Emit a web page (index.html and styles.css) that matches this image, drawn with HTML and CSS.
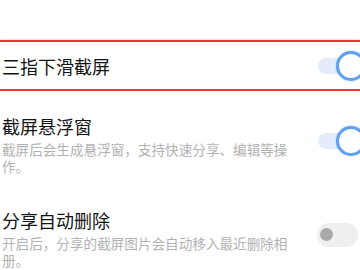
FILE: index.html
```html
<!DOCTYPE html>
<html lang="zh-CN">
<head>
<meta charset="utf-8">
<link rel="stylesheet" href="styles.css">
</head>
<body>
<div class="page">
  <div class="row row-hl">
    <div class="text">
      <div class="title">三指下滑截屏</div>
    </div>
    <div class="switch on"><span class="track"></span><span class="knob"></span></div>
  </div>
  <div class="row row-2">
    <div class="text">
      <div class="title">截屏悬浮窗</div>
      <div class="desc">截屏后会生成悬浮窗，支持快速分享、编辑等操作。</div>
    </div>
    <div class="switch on"><span class="track"></span><span class="knob"></span></div>
  </div>
  <div class="row row-3">
    <div class="text">
      <div class="title">分享自动删除</div>
      <div class="desc">开启后，分享的截屏图片会自动移入最近删除相册。</div>
    </div>
    <div class="switch off"><span class="track"></span><span class="dot"></span></div>
  </div>
</div>
</body>
</html>
```
FILE: styles.css
```css
html, body {
  margin: 0;
  padding: 0;
  background: #ffffff;
}
.page {
  width: 360px;
  height: 270px;
  overflow: hidden;
  font-family: "Noto Sans CJK SC", "Noto Sans", sans-serif;
  padding-top: 40px;
  box-sizing: border-box;
}
.row {
  display: flex;
  align-items: center;
  justify-content: space-between;
  padding-left: 2px;
}
.row-hl {
  height: 47px;
  border-top: 2px solid #f3343a;
  border-bottom: 2px solid #f3343a;
  box-shadow: 0 -2px 1px -1px rgba(243, 52, 58, 0.15);
}
.row-2 {
  margin-top: 22px;
}
.row-3 {
  margin-top: 32.5px;
}
.text {
  width: 292px;
}
.title {
  font-size: 18px;
  line-height: 26px;
  font-weight: 400;
  color: #141414;
}
.desc {
  margin-top: 1.5px;
  font-size: 13.6px;
  line-height: 17px;
  color: #b2b2b2;
}
.switch {
  position: relative;
  width: 44px;
  height: 30px;
  flex: none;
  margin-right: -1px;
}
.row-2 .switch { margin-top: -5.5px; }
.row-3 .switch { margin-top: -5.5px; }
.switch.on .track {
  position: absolute;
  left: 1px;
  top: 7px;
  width: 44px;
  height: 16px;
  border-radius: 8px;
  background: #e4ecfc;
}
.switch.on .knob {
  position: absolute;
  left: 19px;
  top: 0;
  width: 24px;
  height: 24px;
  border: 3px solid #5fa0f3;
  border-radius: 50%;
  background: #ffffff;
  box-shadow: 0 0 2px rgba(95, 160, 243, 0.6);
}
.switch.off .track {
  position: absolute;
  left: 0;
  top: 3px;
  width: 41px;
  height: 24px;
  border-radius: 12px;
  background: #efefef;
}
.switch.off .dot {
  position: absolute;
  left: 3px;
  top: 8px;
  width: 13px;
  height: 13px;
  border-radius: 50%;
  background: #a9a9a9;
}
```
